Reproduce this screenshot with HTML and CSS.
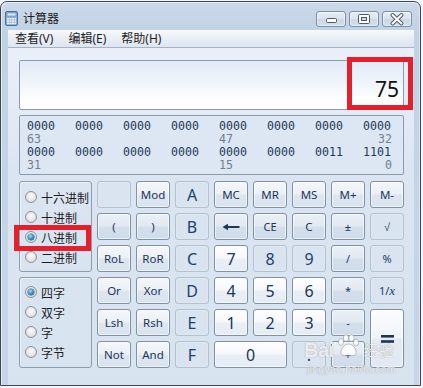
FILE: index.html
```html
<!DOCTYPE html>
<html>
<head>
<meta charset="utf-8">
<title>计算器</title>
<link rel="stylesheet" href="styles.css">
</head>
<body>
<div class="window">
  <div class="titlebar">
    <svg class="app-icon" width="13" height="15" viewBox="0 0 13 15">
      <rect x="0.5" y="0.5" width="12" height="14" rx="1.5" fill="#8fb2d6" stroke="#4d6f93"/>
      <rect x="2" y="2" width="9" height="3" fill="#d6ecfd" stroke="#5b7fa5" stroke-width="0.6"/>
      <g fill="#f2f6fa">
        <rect x="2" y="7" width="2" height="1.5"/><rect x="4.5" y="7" width="2" height="1.5"/><rect x="7" y="7" width="2" height="1.5"/><rect x="9.5" y="7" width="1.6" height="1.5"/>
        <rect x="2" y="9.3" width="2" height="1.5"/><rect x="4.5" y="9.3" width="2" height="1.5"/><rect x="7" y="9.3" width="2" height="1.5"/><rect x="9.5" y="9.3" width="1.6" height="1.5"/>
        <rect x="2" y="11.6" width="2" height="1.5"/><rect x="4.5" y="11.6" width="2" height="1.5"/><rect x="7" y="11.6" width="2" height="1.5"/><rect x="9.5" y="11.6" width="1.6" height="1.5"/>
      </g>
    </svg>
    <span class="title">计算器</span>
    <div class="controls">
      <div class="ctl">
        <svg width="30" height="16" viewBox="0 0 30 16"><rect x="10.5" y="7.5" width="10" height="4" rx="1" fill="#fff" stroke="#4b5a6c"/></svg>
      </div>
      <div class="ctl">
        <svg width="30" height="16" viewBox="0 0 30 16"><rect x="9.5" y="3.5" width="11" height="9" rx="1" fill="#fff" stroke="#4b5a6c"/><rect x="12.5" y="6.5" width="5" height="3" fill="#cfd9e5" stroke="#4b5a6c"/></svg>
      </div>
      <div class="ctl">
        <svg width="30" height="16" viewBox="0 0 30 16"><path d="M10.5 4 L19.5 12.5 M19.5 4 L10.5 12.5" stroke="#4b5a6c" stroke-width="4" stroke-linecap="round"/><path d="M10.5 4 L19.5 12.5 M19.5 4 L10.5 12.5" stroke="#fff" stroke-width="2" stroke-linecap="round"/></svg>
      </div>
    </div>
  </div>
  <div class="client">
    <div class="menubar">
      <span>查看(V)</span><span>编辑(E)</span><span>帮助(H)</span>
    </div>
    <div class="content">
      <div class="display"><span class="value">75</span></div>
      <div class="binary">
        <div class="brow">
          <span>0000</span><span>0000</span><span>0000</span><span>0000</span><span>0000</span><span>0000</span><span>0000</span><span>0000</span>
        </div>
        <div class="brow lbl">
          <span>63</span><span></span><span></span><span></span><span>47</span><span></span><span></span><span class="r">32</span>
        </div>
        <div class="brow">
          <span>0000</span><span>0000</span><span>0000</span><span>0000</span><span>0000</span><span>0000</span><span>0011</span><span>1101</span>
        </div>
        <div class="brow lbl">
          <span>31</span><span></span><span></span><span></span><span>15</span><span></span><span></span><span class="r">0</span>
        </div>
      </div>
      <div class="pad">
        <div class="group g1">
          <label class="radio"><span class="dot"></span>十六进制</label>
          <label class="radio"><span class="dot"></span>十进制</label>
          <label class="radio"><span class="dot on"></span>八进制</label>
          <label class="radio"><span class="dot"></span>二进制</label>
        </div>
        <div class="group g2">
          <label class="radio"><span class="dot on"></span>四字</label>
          <label class="radio"><span class="dot"></span>双字</label>
          <label class="radio"><span class="dot"></span>字</label>
          <label class="radio"><span class="dot"></span>字节</label>
        </div>

        <div class="btn dis"></div>
        <div class="btn fn">Mod</div>
        <div class="btn dis big">A</div>
        <div class="btn fn">MC</div>
        <div class="btn fn">MR</div>
        <div class="btn fn">MS</div>
        <div class="btn fn">M+</div>
        <div class="btn fn">M-</div>

        <div class="btn op">(</div>
        <div class="btn op">)</div>
        <div class="btn dis big">B</div>
        <div class="btn op"><svg width="18" height="8" viewBox="0 0 18 8"><path d="M0.5 4 L6 0.8 L6 7.2 Z" fill="#1c355a"/><rect x="5" y="3" width="12.5" height="2" fill="#1c355a"/></svg></div>
        <div class="btn op sm">CE</div>
        <div class="btn op">C</div>
        <div class="btn op sm">±</div>
        <div class="btn dis sm">√</div>

        <div class="btn fn">RoL</div>
        <div class="btn fn">RoR</div>
        <div class="btn dis big">C</div>
        <div class="btn num big">7</div>
        <div class="btn dis big">8</div>
        <div class="btn dis big">9</div>
        <div class="btn op sm">/</div>
        <div class="btn dis sm">%</div>

        <div class="btn fn">Or</div>
        <div class="btn fn">Xor</div>
        <div class="btn dis big">D</div>
        <div class="btn num big">4</div>
        <div class="btn num big">5</div>
        <div class="btn num big">6</div>
        <div class="btn op sm">*</div>
        <div class="btn dis sm">1/<i class="ix">x</i></div>

        <div class="btn fn">Lsh</div>
        <div class="btn fn">Rsh</div>
        <div class="btn dis big">E</div>
        <div class="btn num big">1</div>
        <div class="btn num big">2</div>
        <div class="btn num big">3</div>
        <div class="btn op sm">-</div>
        <div class="btn num eq"><svg width="13" height="8" viewBox="0 0 13 8"><rect x="0" y="0" width="13" height="2.6" fill="#1c355a"/><rect x="0" y="5.2" width="13" height="2.6" fill="#1c355a"/></svg></div>

        <div class="btn fn">Not</div>
        <div class="btn fn">And</div>
        <div class="btn dis big">F</div>
        <div class="btn num big zero">0</div>
        <div class="btn dis big">.</div>
        <div class="btn op sm">+</div>
      </div>
    </div>
  </div>
</div>

<div class="mark mark-display"></div>
<div class="mark mark-radio"></div>

<div class="watermark">
  <div class="wm-top">
    <span class="wm-bai">Bai</span>
    <svg class="wm-paw" width="26" height="24" viewBox="0 0 26 24">
      <g fill="rgba(255,255,255,0.85)" stroke="rgba(90,90,90,0.45)" stroke-width="0.8">
        <ellipse cx="6" cy="8" rx="2.6" ry="3.4"/>
        <ellipse cx="11" cy="4" rx="2.6" ry="3.4"/>
        <ellipse cx="16.5" cy="4" rx="2.6" ry="3.4"/>
        <ellipse cx="21" cy="8.5" rx="2.6" ry="3.4"/>
        <path d="M13.5 10 C9 10 5 16 6 19.5 C7 22.5 11 21.5 13.5 21.5 C16 21.5 20 22.5 21 19.5 C22 16 18 10 13.5 10 Z"/>
      </g>
    </svg>
    <span class="wm-cn">经验</span>
  </div>
  <div class="wm-url">jingyan.baidu.com</div>
</div>
</body>
</html>
```
FILE: styles.css
```css
html, body {
  margin: 0;
  padding: 0;
}
body {
  position: relative;
  width: 423px;
  height: 388px;
  padding-top: 1px;
  box-sizing: border-box;
  background: #f4f6f9;
  font-family: "Noto Sans", "Noto Sans CJK SC", sans-serif;
  overflow: hidden;
}

.window {
  box-sizing: border-box;
  width: 421px;
  height: 385px;
  border: 1px solid #3a4858;
  border-radius: 7px 7px 0 0;
  padding: 0 6px 0 7px;
  background: linear-gradient(#cbdaea 0px, #c1d2e4 30px, #c3d4e6 200px, #c6d6e8 100%);
  box-shadow: inset 1px 1px 0 rgba(255,255,255,0.55), inset -1px 0 0 rgba(255,255,255,0.4);
  display: flex;
  flex-direction: column;
}

/* Title bar */
.titlebar {
  height: 28px;
  display: flex;
  align-items: flex-start;
  padding-top: 9px;
  box-sizing: border-box;
  margin-left: -3px;
  margin-right: 2px;
}
.app-icon {
  display: block;
  flex: none;
}
.title {
  margin-left: 5px;
  margin-top: -1px;
  font-size: 12px;
  line-height: 16px;
  color: #1a1a1a;
  font-family: "Noto Sans CJK SC", sans-serif;
}
.controls {
  margin-left: auto;
  display: flex;
  gap: 3px;
}
.ctl {
  width: 30px;
  height: 16px;
  box-sizing: border-box;
  border: 1px solid #7f90a6;
  border-radius: 3px;
  background: linear-gradient(#e6edf5 0%, #d9e3ee 50%, #cbd8e6 51%, #d3dfeb 100%);
  box-shadow: inset 0 0 0 1px rgba(255,255,255,0.45);
  position: relative;
}
.ctl svg {
  position: absolute;
  left: -1px;
  top: -1px;
}

/* Client area */
.client {
  flex: 1;
  display: flex;
  flex-direction: column;
  background: linear-gradient(#eaf1f9 0px, #e4ecf6 70px, #dbe5f2 140px, #d8e3f0 100%);
}
.menubar {
  height: 18px;
  box-sizing: border-box;
  border-bottom: 1px solid #a5b3c5;
  background: linear-gradient(#f7f9fc 0%, #eaeff6 45%, #dde5ef 100%);
  display: flex;
  gap: 15px;
  padding-left: 7px;
  font-size: 12px;
  line-height: 17px;
  color: #1e1e1e;
}
.content {
  padding: 12px 10px 0 11px;
}

/* Display */
.display {
  box-sizing: border-box;
  height: 50px;
  border: 1px solid #8d9aab;
  border-radius: 2px;
  background: linear-gradient(#e1eaf6 0%, #eef3fa 40%, #fdfeff 80%, #ffffff 100%);
  display: flex;
  justify-content: flex-end;
  align-items: flex-end;
  padding: 0 4px 9px 0;
}
.value {
  font-size: 21px;
  line-height: 21px;
  color: #111;
  font-family: "Noto Sans", sans-serif;
}

/* Binary panel */
.binary {
  margin-top: 5px;
  box-sizing: border-box;
  height: 60px;
  border: 1px solid #8d9aab;
  border-radius: 2px;
  background: #dde7f3;
  padding: 4px 0 0 7px;
  font-family: "DejaVu Sans Mono", monospace;
  font-size: 11.6px;
  line-height: 13px;
  color: #24395a;
}
.brow {
  display: grid;
  grid-template-columns: repeat(7, 48px) 29px;
  height: 13px;
}
.brow.lbl {
  color: #6f7e90;
}
.brow .r {
  text-align: right;
}

/* Button pad */
.pad {
  margin-top: 6px;
  display: grid;
  grid-template-columns: 73px repeat(8, 34px);
  grid-template-rows: repeat(6, 27px);
  column-gap: 5px;
  row-gap: 5px;
}
.group {
  grid-column: 1;
  box-sizing: border-box;
  border: 1px solid #8e9cae;
  border-radius: 3px;
  box-shadow: inset 1px 1px 0 rgba(255,255,255,0.5);
  display: flex;
  flex-direction: column;
}
.g1 {
  grid-row: 1 / 4;
  padding-top: 5px;
}
.g2 {
  grid-row: 4 / 7;
  padding-top: 4px;
}
.radio {
  height: 20px;
  display: flex;
  align-items: center;
  padding-left: 5px;
  font-size: 12px;
  color: #1e1e1e;
  font-family: "Noto Sans CJK SC", sans-serif;
}
.dot {
  width: 12px;
  height: 12px;
  box-sizing: border-box;
  border-radius: 50%;
  border: 1px solid #8b9096;
  background: radial-gradient(circle at 50% 40%, #fbfbfb 0%, #e6e6e6 55%, #cfd1d4 100%);
  margin-right: 4px;
  position: relative;
  flex: none;
}
.dot.on::after {
  content: "";
  position: absolute;
  left: 2px;
  top: 2px;
  width: 6px;
  height: 6px;
  border-radius: 50%;
  background: radial-gradient(circle at 40% 35%, #a9e0fb 0%, #3d98d0 45%, #134d7d 100%);
  box-shadow: 0 0 0 0.5px #26537b;
}

.btn {
  box-sizing: border-box;
  border: 1px solid #7f91a7;
  border-radius: 3px;
  display: flex;
  align-items: center;
  justify-content: center;
  font-family: "Noto Sans", sans-serif;
  font-size: 11.5px;
  color: #1c355a;
  box-shadow: inset 0 0 0 1px rgba(255,255,255,0.6);
}
.btn.big {
  font-size: 16px;
}
.btn.sm {
  font-size: 11px;
}
.num {
  background: linear-gradient(#fdfeff 0%, #f5f8fc 48%, #e9eff6 52%, #e5ecf5 100%);
}
.fn {
  background: linear-gradient(#f4f7fb 0%, #ebf0f7 48%, #dde6f0 52%, #d9e3ee 100%);
}
.op {
  background: linear-gradient(#eaf0f7 0%, #e2e9f2 48%, #d4dfec 52%, #d0dcea 100%);
}
.dis {
  border-color: #b3c1d1;
  background: #dae4f0;
  box-shadow: inset 0 0 0 1px rgba(255,255,255,0.15);
  color: #22406a;
}
.ix {
  font-family: "Liberation Serif", serif;
  font-size: 13px;
}
.eq {
  grid-column: 9;
  grid-row: 5 / 7;
  background: linear-gradient(#fbfcfe 0%, #f1f5fa 48%, #e4ebf4 52%, #e2e9f3 100%);
}
.zero {
  grid-column: span 2;
}

/* Annotation overlays */
.mark {
  position: absolute;
  box-sizing: border-box;
  border: 5px solid #e51f2b;
}
.mark-display {
  left: 347px;
  top: 57px;
  width: 66px;
  height: 53px;
}
.mark-radio {
  left: 14px;
  top: 225px;
  width: 77px;
  height: 26px;
}

/* Watermark overlay */
.watermark {
  position: absolute;
  left: 304px;
  top: 333px;
  color: rgba(255,255,255,0.85);
  text-shadow: 0 0 1px rgba(60,60,60,0.55);
}
.wm-top {
  display: flex;
  align-items: flex-end;
  height: 28px;
}
.wm-bai {
  font-family: "Liberation Sans", sans-serif;
  font-weight: bold;
  font-size: 20px;
  line-height: 22px;
  letter-spacing: -0.5px;
}
.wm-paw {
  margin-left: 1px;
  margin-bottom: 3px;
}
.wm-cn {
  font-family: "Noto Sans CJK SC", sans-serif;
  font-size: 15px;
  line-height: 22px;
  margin-left: 3px;
}
.wm-url {
  font-family: "Liberation Sans", sans-serif;
  font-size: 11px;
  line-height: 13px;
  margin-left: 3px;
  margin-top: 2px;
}
```
